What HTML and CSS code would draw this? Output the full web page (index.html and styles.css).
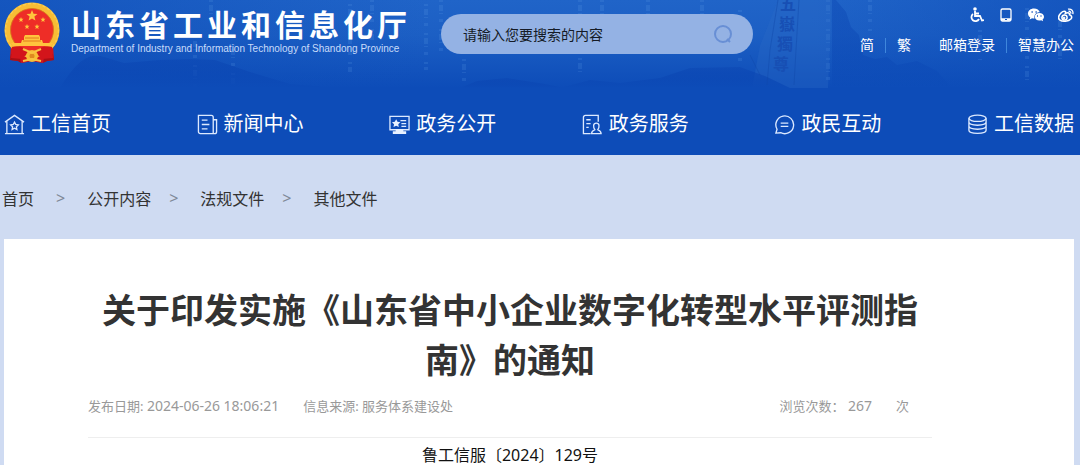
FILE: index.html
```html
<!doctype html>
<html lang="zh-CN">
 <head>
  <meta charset="utf-8">
  <meta name="viewport" content="width=device-width, initial-scale=1.0">
  <title>山东省工业和信息化厅</title>
  <link rel="stylesheet" href="styles.css">
 </head>
 <body>
  <header class="header">
   <!-- skyline, falling digits and the carved stone behind the header -->
   <svg class="header-art" viewBox="0 0 1080 90" preserveAspectRatio="xMidYMin slice" aria-hidden="true">
    <defs>
     <linearGradient id="fade" x1="0" y1="0" x2="0" y2="1">
      <stop offset="0" stop-color="#0a43b0" stop-opacity=".4"/>
      <stop offset="1" stop-color="#0d4cb8"/>
     </linearGradient>
     <linearGradient id="cliff" x1="0" y1="0" x2="0" y2="1">
      <stop offset="0" stop-color="#0b45b2" stop-opacity=".4"/>
      <stop offset="1" stop-color="#0d4cb8" stop-opacity=".6"/>
     </linearGradient>
    </defs>
    <g fill="none" stroke="#6aa5ea" stroke-opacity=".16" stroke-width="4" stroke-dasharray="2 3 6 2 1 5 3 7">
     <path d="M195 36V88M211 0v20M233 44V86M350 4V72M372 0V40"/>
     <path d="M426 4V70M441 0V55M464 30V84M580 0V72M602 0V25M648 0V58M702 0V52M740 10V66"/>
     <path d="M828 0V80M870 0V32M980 30V60M1027 8V84M1060 16V62"/>
    </g>
    <path fill="#2a69c6" fill-opacity=".35" d="M752 88L760 46L778 0H832L828 88z"/>
    <path fill="url(#cliff)" d="M832 0h4l10 12 5 15 8 8 4 20 12 4 12-2 10 8 20-4 20 10 15 17H832z"/>
    <path fill="url(#fade)" d="M60 88C76 62 88 52 104 57L124 63L160 60L190 59L215 60L250 72L290 84L340 88z"/>
    <path fill="url(#fade)" d="M560 88L590 80L620 83L660 78L690 68L740 67L765 76L790 88z"/>
    <path fill="url(#fade)" d="M565 88l-20-4-38-6-30 3-17 7z"/>
    <path fill="none" stroke="#0e46a8" stroke-opacity=".4" d="M778 0l-8 50-3 35M799 0l-3 50-2 35M750 55l10 20"/>
    <g class="carving">
     <text x="780" y="10">五</text>
     <text x="779" y="30">嶽</text>
     <text x="777" y="50">獨</text>
     <text x="773" y="70">尊</text>
    </g>
   </svg>

   <div class="header-top">
    <a class="brand" href="#">
     <svg class="emblem" viewBox="0 0 58 62" aria-hidden="true">
      <path fill="#d3151b" d="M8 43L7 58l8 1 4 2 10-2 10 2 5-2 7-1-1-15z"/>
      <path fill="#a90f16" d="M8 52l8-2 2 11-3-2-8-1zM50 52l-8-2-2 11 4-2 7-1z"/>
      <circle cx="29" cy="28" r="24.5" fill="#f03028" stroke="#f7bd35" stroke-width="6"/>
      <circle cx="29" cy="28" r="26.5" fill="none" stroke="#ffdd6a" stroke-width="1.5" stroke-opacity=".5" stroke-dasharray="3 2"/>
      <circle cx="29" cy="28" r="21.5" fill="#ee2d27" stroke="#d4851c" stroke-width=".8"/>
      <g fill="#ffc43d">
       <path d="M29 8l1.500 3.800 4 .2-3.100 2.600 1 4-3.400-2.200-3.400 2.200 1-4-3.100-2.600 4-.2z"/>
       <path id="star" d="M18 15l.7 1.700 1.900.1-1.500 1.200.5 1.900-1.600-1-1.600 1 .5-1.900-1.500-1.200 1.900-.1z"/>
       <use href="#star" x="22"/>
       <use href="#star" x="6" y="7"/>
       <use href="#star" x="16" y="7"/>
       <path d="M22 33h14l1 2v3h2l1 3h10l-2 3H10l-2-3h10l1-3h2v-3z"/>
      </g>
      <path stroke="#dc6818" stroke-width=".8" d="M22 36h14M20 39h18"/>
      <path fill="#d3151b" d="M9 45c7-2 12 0 17 5l-7 7-11-1zM49 45c-7-2-12 0-17 5l7 7 11-1z"/>
      <circle cx="29" cy="54" r="6" fill="#f8bd35"/>
      <circle cx="29" cy="54" r="2.500" fill="#df891f"/>
      <path fill="none" stroke="#f9c342" stroke-width="2" d="M20 47l9 4 9-4M20 59l9-2 9 2"/>
     </svg>
     <span class="brand-text">
      <span class="brand-name">山东省工业和信息化厅</span>
      <span class="brand-en" lang="en">Department of Industry and Information Technology of Shandong Province</span>
     </span>
    </a>

    <form class="search">
     <input class="search-input" type="text" aria-label="搜索" placeholder="请输入您要搜索的内容">
     <button class="search-button" type="button" aria-label="搜索">
      <svg width="20" height="20" viewBox="0 0 20 20" fill="none" stroke="#688fd5" stroke-width="2"><circle cx="10" cy="10" r="8"/><path d="M14 15l3 3"/></svg>
     </button>
    </form>

    <div class="tools">
     <div class="tool-icons">
      <a href="#" aria-label="无障碍">
       <svg viewBox="0 0 16 16" fill="none" stroke="#fff" stroke-width="1.800"><circle cx="7" cy="2" r="1.800" fill="#fff" stroke="none"/><path d="M7 4v5h5l2 4.500 2-.5M7 6.500h4M5 7a4 4 0 1 0 6 5"/></svg>
      </a>
      <a href="#" aria-label="移动版">
       <svg viewBox="0 0 16 16" fill="none" stroke="#fff"><rect x="3" y="2" width="10" height="12" rx="1.500" stroke-width="1.300"/><path d="M3 12.500h10" stroke-width="2.500"/><path d="M7 12.500h2" stroke="#1857bf"/></svg>
      </a>
      <a href="#" aria-label="微信">
       <svg viewBox="0 0 16 16"><path fill="#fff" d="M6 1.500C2.500 1.500 0 3.800 0 6.500c0 1.600.8 3 2.200 3.900L1.600 12.500l2.500-1.300c.8.2 1.500.3 2.400.2C5.800 8 8 5.300 11.800 5.300 11.200 3 9 1.500 6 1.500z"/><path fill="#fff" d="M11.300 6C8.700 6 6.800 7.700 6.800 9.800s2 3.800 4.500 3.800c.7 0 1.300-.1 1.900-.3l1.900 1-.5-1.700c.9-.7 1.400-1.700 1.400-2.800C16 7.700 13.900 6 11.300 6z"/><path stroke="#1857bf" stroke-width="1.300" d="M3.500 5h1.300M7.500 5h1.300M9 9h1M12.500 9h1"/></svg>
      </a>
      <a href="#" aria-label="微博">
       <svg viewBox="0 0 16 16" fill="none" stroke="#fff"><path stroke-width="1.600" d="M7.500 6.200C8.500 4 5.500 3.500 3 6S-.5 11.500 2 13.200s8.500 1.300 10.800-1.200c2-2.300 0-3.800-1.300-4.200.6-2-1.500-2.400-4-1.600z"/><circle cx="6.500" cy="10.500" r="2.600" stroke-width="1.500"/><circle cx="6" cy="11" r="1" fill="#fff"/><path stroke-width="1.300" d="M10 2.200c3.500-.8 5.600 2 4.800 5M10.500 4.300c1.700-.3 2.600.9 2.200 2.300"/></svg>
      </a>
     </div>
     <div class="tool-links">
      <a href="#">简</a>
      <a class="divided" href="#">繁</a>
      <a class="mail" href="#">邮箱登录</a>
      <a class="divided" href="#">智慧办公</a>
     </div>
    </div>
   </div>

   <nav class="nav">
    <a href="#">
     <svg viewBox="0 0 22 22"><path d="M1 8.500L11 1.500l10 7M3 7.500V20M19 7.500V20M1 20.500h20"/><path d="M11 8.500l1.300 2.500 2.700.4-2 2 .5 2.800-2.500-1.300-2.500 1.300.5-2.800-2-2 2.700-.4z"/></svg>
     工信首页
    </a>
    <a href="#">
     <svg viewBox="0 0 22 22"><path d="M17 20.500H3.500A2 2 0 0 1 1.500 18.500V1.500H15a2 2 0 0 1 2 2v17zM17 6h3.500v12.500a2 2 0 0 1-2 2H17M5 6.500h6M5 11h8M5 15.500h6"/></svg>
     新闻中心
    </a>
    <a href="#">
     <svg viewBox="0 0 22 22"><path d="M1 2.500h20v14H1zM12 7h6M13 10h5M13 13h5"/><path fill="#e8f1ff" stroke="none" d="M7.500 5.500l1.400 2.700 3 .4-2.200 2.100.6 3-2.800-1.400-2.800 1.400.6-3-2.200-2.100 3-.4zM7 16h8v2h3v3H4v-3h3z"/></svg>
     政务公开
    </a>
    <a href="#">
     <svg viewBox="0 0 22 22"><path d="M9 20.500H1.500v-17a2 2 0 0 1 2-2h13.500V8M4.500 6H9M4.500 10H9M4.500 14H7M10 20.500c0-2 1-3 3.500-4-2-3-2-7 1.500-7s3.500 4 1.500 7c2.500 1 3.500 2 3.500 4z"/></svg>
     政务服务
    </a>
    <a href="#">
     <svg viewBox="0 0 22 22"><path d="M3.200 16A9.300 9.300 0 1 1 7 19.600L2 20zM7 9.500h8M7 13h8"/></svg>
     政民互动
    </a>
    <a href="#">
     <svg viewBox="0 0 22 22"><ellipse cx="11" cy="4.500" rx="9" ry="3.300"/><path d="M2 4.500v12.500c0 4.400 18 4.400 18 0V4.500M2 8.500c0 4.400 18 4.400 18 0M2 12.700c0 4.400 18 4.400 18 0"/></svg>
     工信数据
    </a>
   </nav>
  </header>

  <div class="breadcrumb">
   <a class="home" href="#">首页</a><span>&gt;</span>
   <a href="#">公开内容</a><span>&gt;</span>
   <a href="#">法规文件</a><span>&gt;</span>
   <a href="#">其他文件</a>
  </div>

  <main class="article">
   <h1>关于印发实施《山东省中小企业数字化转型水平评测指南》的通知</h1>
   <div class="meta">
    <span>发布日期: <time>2024-06-26 18:06:21</time></span>
    <span>信息来源: 服务体系建设处</span>
    <span class="views">浏览次数： <b>267</b></span>
    <span>次</span>
   </div>
   <p class="doc-number">鲁工信服〔2024〕129号</p>
  </main>
 </body>
</html>
```
FILE: styles.css
```css
* {
	box-sizing: border-box;
}

body {
	margin: 0;
	background: #cfdbf2;
	color: #333;
	font-family: "Noto Sans", "Noto Sans CJK SC", sans-serif;
	font-size: 16px;
}

a {
	color: inherit;
	text-decoration: none;
}

/* header */
.header {
	position: relative;
	color: #fff;
	background: linear-gradient(to right, rgba(13, 76, 184, 0.6), rgba(13, 76, 184, 0) 40%, rgba(13, 76, 184, 0) 75%, rgba(13, 76, 184, 0.6)),
		linear-gradient(to bottom, #2064c8 0, #1c5fc4 35px, #0d4cb8 88px);
}

.header-art {
	position: absolute;
	top: 0;
	left: 0;
	width: 100%;
	height: 90px;
}

.carving {
	fill: #174fb4;
	font-family: "Noto Sans CJK TC", sans-serif;
	font-size: 16px;
	font-weight: bold;
}

.header-top {
	position: relative;
	display: flex;
	align-items: flex-start;
	height: 93px;
	padding: 2px 6px 0 3px;
}

.brand {
	display: flex;
	gap: 10px;
}

.emblem {
	width: 58px;
	height: 62px;
}

.brand-text {
	display: flex;
	flex-direction: column;
	padding-top: 4px;
	white-space: nowrap;
}

.brand-name {
	font-size: 30px;
	font-weight: bold;
	line-height: 37px;
	letter-spacing: 4px;
}

.brand-en {
	color: #c8dcfa;
	font-family: "Liberation Sans", Arial, sans-serif;
	font-size: 10px;
	line-height: 12px;
}

.search {
	display: flex;
	align-items: center;
	width: 312px;
	height: 40px;
	margin: 12px 0 0 30px;
	padding: 0 20px 0 22px;
	border-radius: 20px;
	background: #94b2e4;
}

.search-input {
	flex: 1;
	min-width: 0;
	padding: 0;
	border: 0;
	outline: 0;
	background: none;
	font: 14px "Noto Sans", "Noto Sans CJK SC", sans-serif;
}

.search-input::placeholder {
	color: #151b26;
	opacity: 1;
}

.search-button {
	display: flex;
	padding: 0;
	border: 0;
	background: none;
}

.tools {
	display: flex;
	flex-direction: column;
	align-items: flex-end;
	gap: 12px;
	margin-left: auto;
	padding-top: 5px;
}

.tool-icons {
	display: flex;
	gap: 14px;
}

.tool-icons svg {
	display: block;
	width: 16px;
	height: 16px;
}

.tool-links {
	display: flex;
	font-size: 14px;
	line-height: 20px;
	white-space: nowrap;
}

.divided {
	display: flex;
	align-items: center;
}

.divided::before {
	content: "";
	width: 1px;
	height: 15px;
	margin: 0 11px;
	background: #3f87dc;
}

.mail {
	margin-left: 28px;
}

/* main menu */
.nav {
	position: relative;
	display: flex;
	justify-content: space-between;
	padding: 0 6px 0 4px;
}

.nav a {
	display: flex;
	align-items: center;
	gap: 6px;
	font-size: 20px;
	line-height: 62px;
	white-space: nowrap;
}

.nav svg {
	width: 21px;
	height: 21px;
	fill: none;
	stroke: #dce9ff;
	stroke-width: 1.4;
}

/* breadcrumb */
.breadcrumb {
	display: flex;
	align-items: center;
	height: 84px;
	padding: 2px 2px 0;
}

.breadcrumb span {
	margin: 0 22px 0 18px;
	color: #808998;
	font-size: 16px;
}

.breadcrumb .home {
	margin-right: 4px;
}

/* article */
.article {
	min-height: 226px;
	margin: 0 6px 0 4px;
	padding: 46px 142px 0 84px;
	background: #fff;
}

.article h1 {
	margin: 0;
	font-size: 34px;
	line-height: 50px;
	text-align: center;
}

.meta {
	display: flex;
	gap: 24px;
	height: 53px;
	padding: 10px 23px 0 0;
	border-bottom: 1px solid #eee;
	color: #999;
	font-size: 13px;
	line-height: 22px;
}

.meta time,
.meta b {
	font-size: 14px;
	font-weight: normal;
}

.meta .views {
	margin-left: auto;
}

.doc-number {
	margin: 5px 0 0;
	color: #111;
	line-height: 24px;
	text-align: center;
}
```
